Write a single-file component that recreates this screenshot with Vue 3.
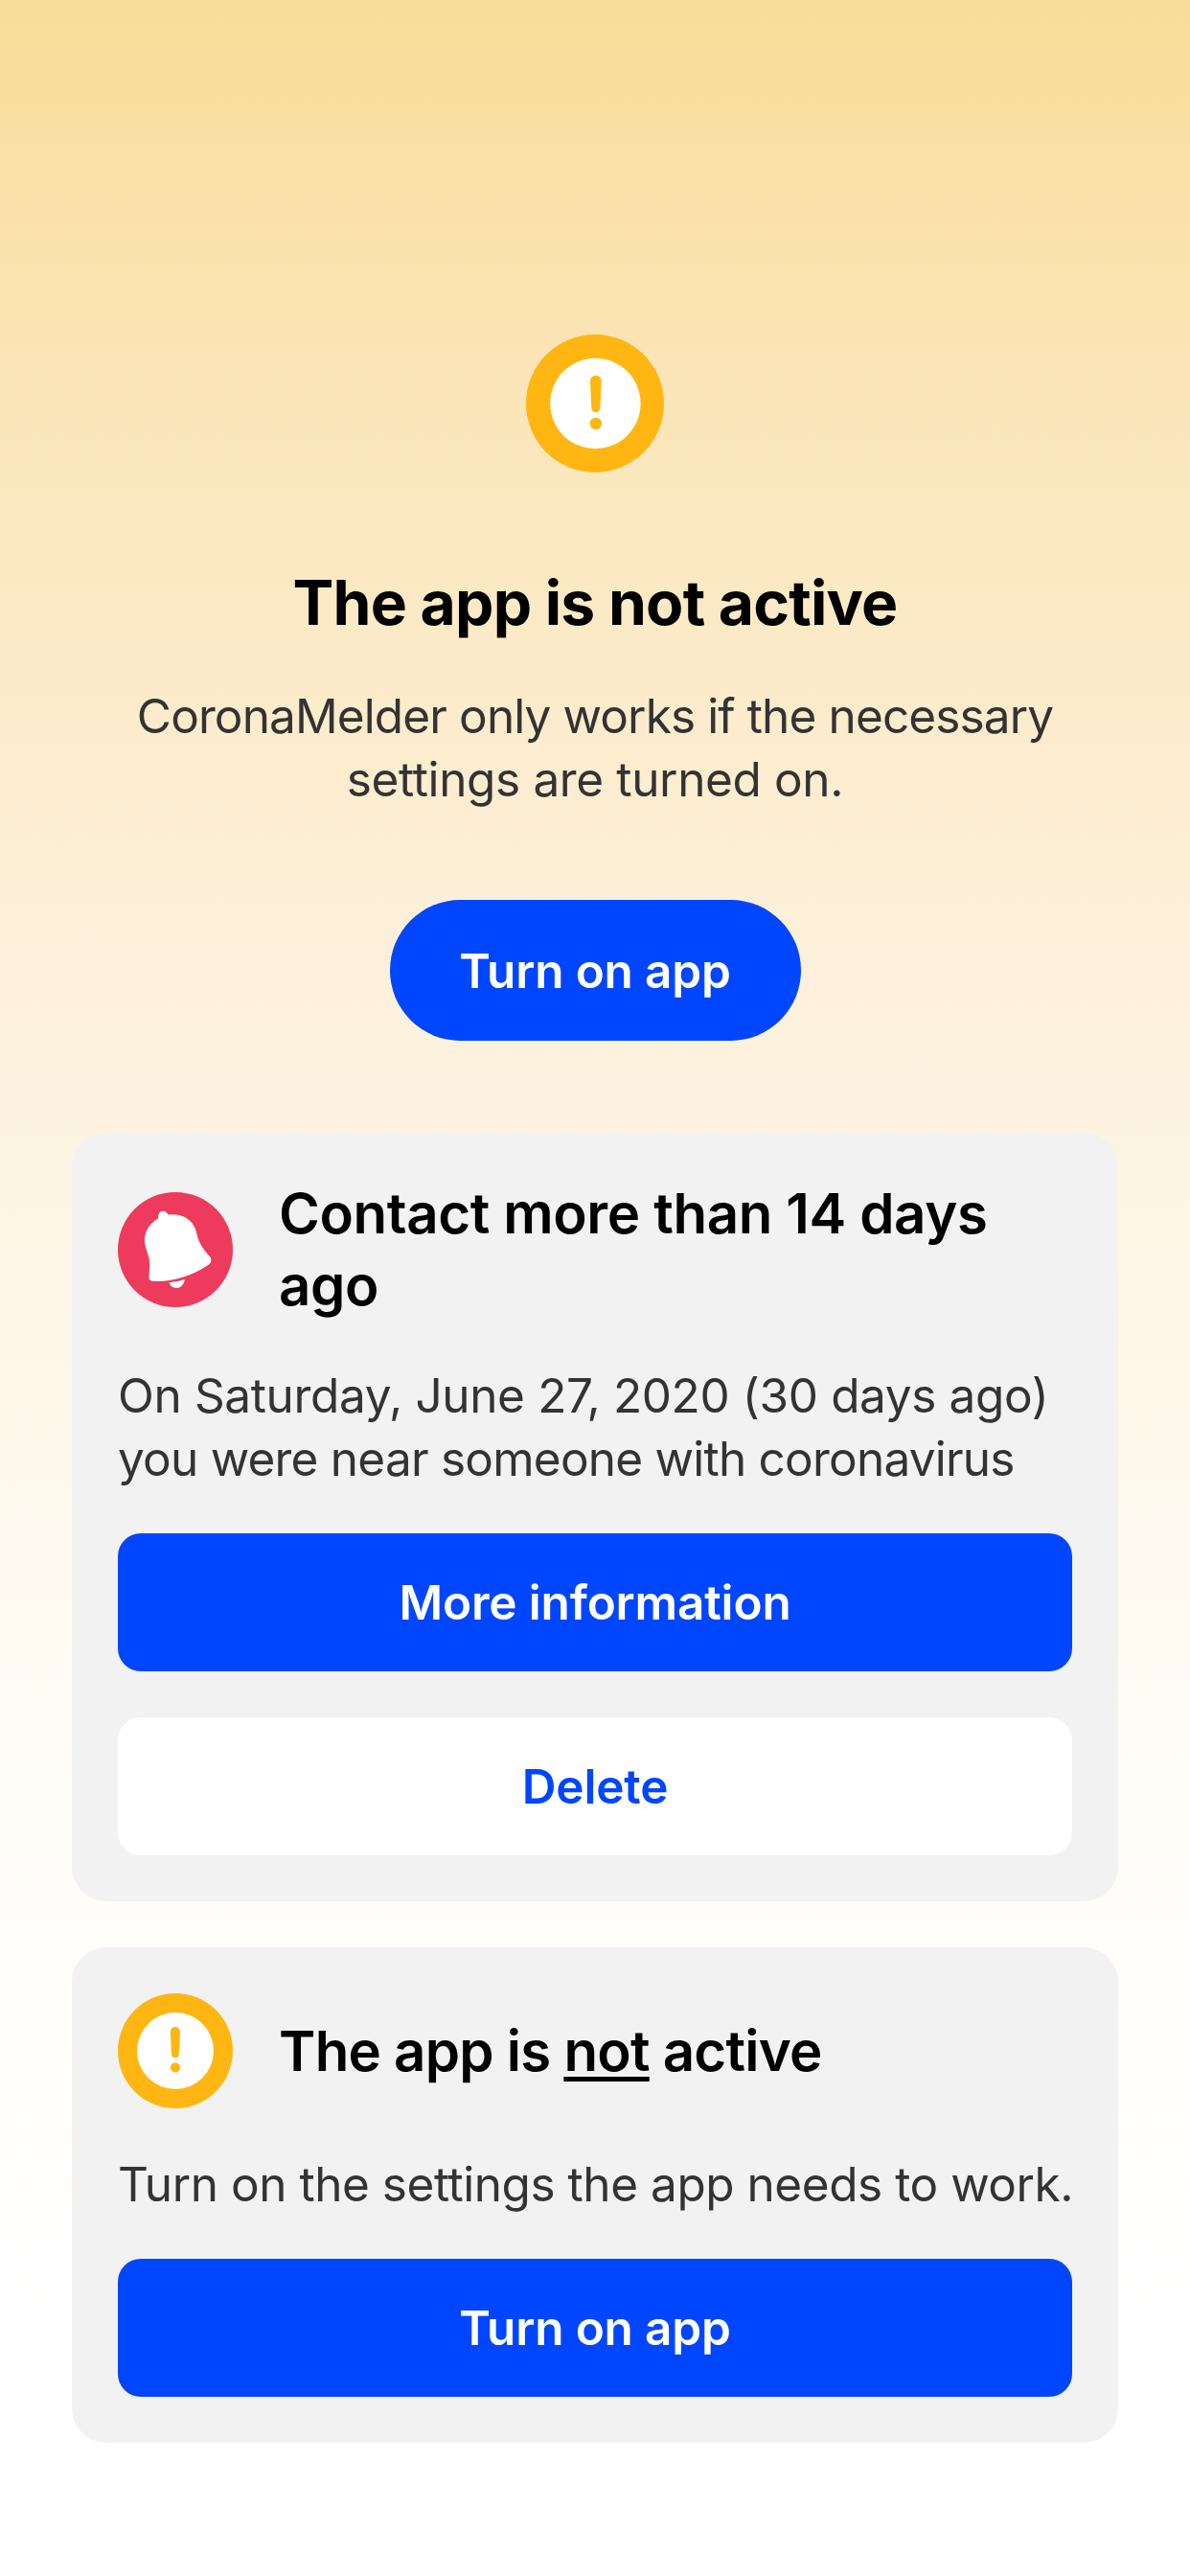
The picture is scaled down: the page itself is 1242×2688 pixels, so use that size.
<script setup>
const contactLines = [
  { text: 'On Saturday, June 27, 2020 (30 days ago)', cls: 'wide-track' },
  { text: 'you were near someone with coronavirus', cls: 'tight-track' }
]
</script>

<template>
  <main class="screen">
    <svg class="hero-icon" viewBox="0 0 144 144">
      <circle cx="72" cy="72" r="72" fill="#ffb612" />
      <circle cx="72.400" cy="72" r="47.200" fill="#fff" />
      <path d="M67 48.500a5.850 5.850 0 0 1 11.700 0l-1.300 28.200a4.550 4.550 0 0 1-9.100 0z" fill="#ffb612" />
      <circle cx="72.800" cy="93" r="6.200" fill="#ffb612" />
    </svg>
    <h1>The app is not active</h1>
    <p class="lead"><span>CoronaMelder only works if the necessary</span><span class="wide-track">settings are turned on.</span></p>
    <button class="pill">Turn on app</button>

    <section class="card contact">
      <header>
        <svg class="icon" viewBox="0 0 120 120">
          <circle cx="60" cy="60" r="60" fill="#ee3a5c" />
          <path d="M42 27.500C42 22 44 19.700 47.300 19.700C50 19.700 51.500 21.500 52.500 23.500C60 22.800 65 23.500 70.300 26.300C76 29.500 79.500 34 81.300 39.500C83 45 83.500 49.500 86.300 54.300C89.500 60 93 64 96.300 67.500C98.200 69.700 97.500 73.500 95 75.500C87 81 78 85.500 68.700 88.500C57 92.300 46 93.500 38 93C35 92.700 32.300 91.500 32.400 89C33 82 33.500 76 32.600 69.300C31.500 63 28.500 59 28 51.500C27.500 41 33 32.500 42 27.500Z" fill="#fff" />
          <path d="M53.700 94.300Q62 93.600 69.700 90.900C69.500 96 65.500 100 61 100C57.500 100 54.500 98 53.700 94.300Z" fill="#fff" />
        </svg>
        <h2>Contact more than 14 days<br />ago</h2>
      </header>
      <p><span v-for="line in contactLines" :key="line.text" :class="line.cls">{{ line.text }}</span></p>
      <button class="wide">More information</button>
      <button class="wide white">Delete</button>
    </section>

    <section class="card inactive">
      <header>
        <svg class="icon" viewBox="0 0 144 144">
          <circle cx="72" cy="72" r="72" fill="#ffb612" />
          <circle cx="72" cy="72" r="48" fill="#fff" />
          <path d="M65.800 48a6.100 6.100 0 0 1 12.200 0l-1.400 28a4.700 4.700 0 0 1-9.400 0z" fill="#ffb612" />
          <circle cx="72" cy="92.800" r="6.200" fill="#ffb612" />
        </svg>
        <h2 class="status">The app is <u>not</u> active</h2>
      </header>
      <p><span class="mid-track">Turn on the settings the app needs to work.</span></p>
      <button class="wide">Turn on app</button>
    </section>
  </main>
</template>

<style>
body { margin: 0; }
</style>
<style scoped>
.screen {
  box-sizing: border-box;
  width: 1242px;
  height: 2688px;
  padding: 349px 75px 0;
  display: flex;
  flex-direction: column;
  align-items: center;
  overflow: hidden;
  background: linear-gradient(#f9dc98 0%, #fbe6ba 16%, #fdf1dc 38%, #fff9ee 58%, #fffdf8 70%, #fff 90%);
  font-family: Inter, sans-serif;
  color: #000;
}
.hero-icon { width: 144px; height: 144px; flex: none; }
h1, h2, p { margin: 0; white-space: nowrap; }
h1 { margin-top: 96px; font-size: 64.2px; line-height: 80px; font-weight: 700; letter-spacing: -0.8px; }
p { font-size: 49.5px; line-height: 66px; color: #333; letter-spacing: -0.88px; }
p span { display: block; }
.wide-track { letter-spacing: -0.36px; }
.mid-track { letter-spacing: -0.45px; }
.tight-track { letter-spacing: -0.77px; }
.lead { margin-top: 45px; text-align: center; }
button {
  border: 0;
  padding: 0;
  background: #0046ff;
  color: #fff;
  font: 600 49.5px/60px Inter, sans-serif;
  letter-spacing: -0.15px;
}
.pill { width: 429px; height: 147px; border-radius: 74px; margin-top: 93px; flex: none; }
.card { box-sizing: border-box; width: 1092px; border-radius: 36px; background: #f2f2f2; flex: none; }
.contact { margin-top: 96px; height: 802px; padding: 47px 48px 48px; }
.inactive { margin-top: 48px; height: 517px; padding: 48px; }
header { display: flex; align-items: center; gap: 48px; }
.contact header { height: 150px; }
.inactive header { height: 120px; }
.icon { width: 120px; height: 120px; flex: none; }
h2 { font-size: 58.2px; line-height: 75px; font-weight: 600; letter-spacing: -0.37px; }
.status { letter-spacing: -0.75px; }
u { text-decoration-thickness: 5px; text-underline-offset: 6px; }
.contact p { margin-top: 44px; }
.inactive p { margin-top: 46px; }
.wide { display: block; width: 996px; height: 144px; margin-top: 45px; border-radius: 24px; }
.white { background: #fff; color: #0046ff; margin-top: 48px; }
</style>
